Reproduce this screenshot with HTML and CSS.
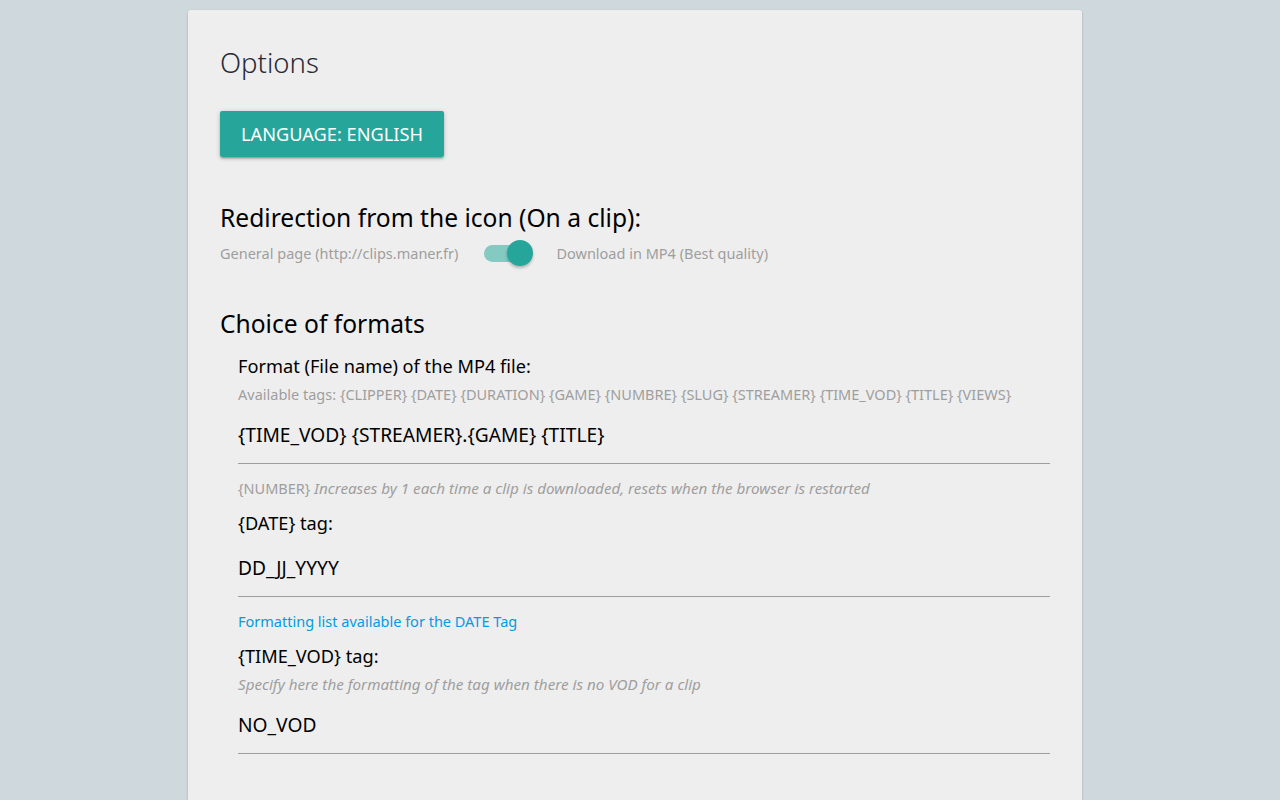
FILE: index.html
```html
<!DOCTYPE html>
<html lang="en">
<head>
<meta charset="utf-8">
<title>Options</title>
<link rel="stylesheet" href="styles.css">
</head>
<body>
<main class="card">
  <h1 class="title">Options</h1>
  <button class="btn">LANGUAGE: ENGLISH</button>

  <h2 class="section-title redirect-title">Redirection from the icon (On a clip):</h2>
  <div class="switch-row">
    <span class="switch-label">General page (http://clips.maner.fr)</span>
    <span class="switch">
      <span class="track"></span>
      <span class="thumb"></span>
    </span>
    <span class="switch-label">Download in MP4 (Best quality)</span>
  </div>

  <h2 class="section-title formats-title">Choice of formats</h2>
  <div class="formats">
    <div class="field-label first">Format (File name) of the MP4 file:</div>
    <div class="hint tight">Available tags: {CLIPPER} {DATE} {DURATION} {GAME} {NUMBRE} {SLUG} {STREAMER} {TIME_VOD} {TITLE} {VIEWS}</div>
    <div class="input">{TIME_VOD} {STREAMER}.{GAME} {TITLE}</div>
    <div class="hint after-input">{NUMBER} <em>Increases by 1 each time a clip is downloaded, resets when the browser is restarted</em></div>

    <div class="field-label">{DATE} tag:</div>
    <div class="input date-input">DD_JJ_YYYY</div>
    <a class="link after-input" href="#">Formatting list available for the DATE Tag</a>

    <div class="field-label">{TIME_VOD} tag:</div>
    <div class="hint tight"><em>Specify here the formatting of the tag when there is no VOD for a clip</em></div>
    <div class="input">NO_VOD</div>
  </div>
</main>
</body>
</html>
```
FILE: styles.css
```css
html, body {
  margin: 0;
  padding: 0;
}

body {
  background: #cfd8dc;
  font-family: "Noto Sans", "Open Sans", sans-serif;
  color: #000;
  height: 800px;
  overflow: hidden;
}

.card {
  display: flex;
  flex-direction: column;
  align-items: flex-start;
  width: 894px;
  box-sizing: border-box;
  margin: 10px 0 0 188px;
  padding: 33px 32px 47px;
  background: #eeeeee;
  border-radius: 3px 3px 0 0;
  box-shadow: 0 1px 3px rgba(0, 0, 0, 0.12), 0 1px 2px rgba(0, 0, 0, 0.1);
}

.title {
  margin: 0;
  font-size: 27.5px;
  font-weight: 300;
  line-height: 40px;
  color: #2a2a36;
  letter-spacing: 0;
}

.btn {
  margin-top: 28px;
  height: 46px;
  padding: 0 21px;
  border: none;
  border-radius: 2px;
  background: #26a69a;
  color: #fff;
  font-family: inherit;
  font-size: 18.2px;
  letter-spacing: 0;
  box-shadow: 0 2px 2px 0 rgba(0, 0, 0, 0.14), 0 3px 1px -2px rgba(0, 0, 0, 0.12), 0 1px 5px 0 rgba(0, 0, 0, 0.2);
}

.section-title {
  margin: 0;
  font-size: 24.6px;
  font-weight: 400;
  line-height: 32px;
  color: #000;
}

.redirect-title {
  margin-top: 45px;
}

.formats-title {
  margin-top: 42px;
}

.switch-row {
  display: flex;
  align-items: center;
  height: 26px;
  margin-top: 6px;
}

.switch-label {
  font-size: 14.5px;
  color: #9e9e9e;
}

.switch {
  position: relative;
  width: 49px;
  height: 26px;
  margin: 0 23px 0 26px;
}

.track {
  position: absolute;
  left: 0;
  top: 5px;
  width: 42px;
  height: 17px;
  border-radius: 9px;
  background: #84c9c2;
}

.thumb {
  position: absolute;
  right: 0;
  top: 0;
  width: 26px;
  height: 26px;
  border-radius: 50%;
  background: #26a69a;
  box-shadow: 0 2px 3px rgba(0, 0, 0, 0.25);
}

.formats {
  display: flex;
  flex-direction: column;
  align-items: flex-start;
  align-self: stretch;
  padding-left: 18px;
}

.field-label {
  font-size: 18.2px;
  line-height: 26px;
  margin-top: 12px;
  color: #000;
}

.field-label.first {
  margin-top: 13px;
}

.hint {
  font-size: 14.5px;
  line-height: 20px;
  color: #9e9e9e;
}

.hint em {
  font-style: italic;
  font-size: 15.2px;
}

.tight {
  margin-top: 5px;
}

.input {
  align-self: stretch;
  margin-top: 16px;
  font-size: 19.2px;
  line-height: 30px;
  padding-bottom: 13px;
  border-bottom: 1px solid #9e9e9e;
  color: #000;
}

.date-input {
  margin-top: 17px;
}

.after-input {
  margin-top: 14px;
}

.link {
  font-size: 14.5px;
  line-height: 20px;
  color: #039be5;
  text-decoration: none;
}

.field-label + .input {
  margin-top: 17px;
}
```
